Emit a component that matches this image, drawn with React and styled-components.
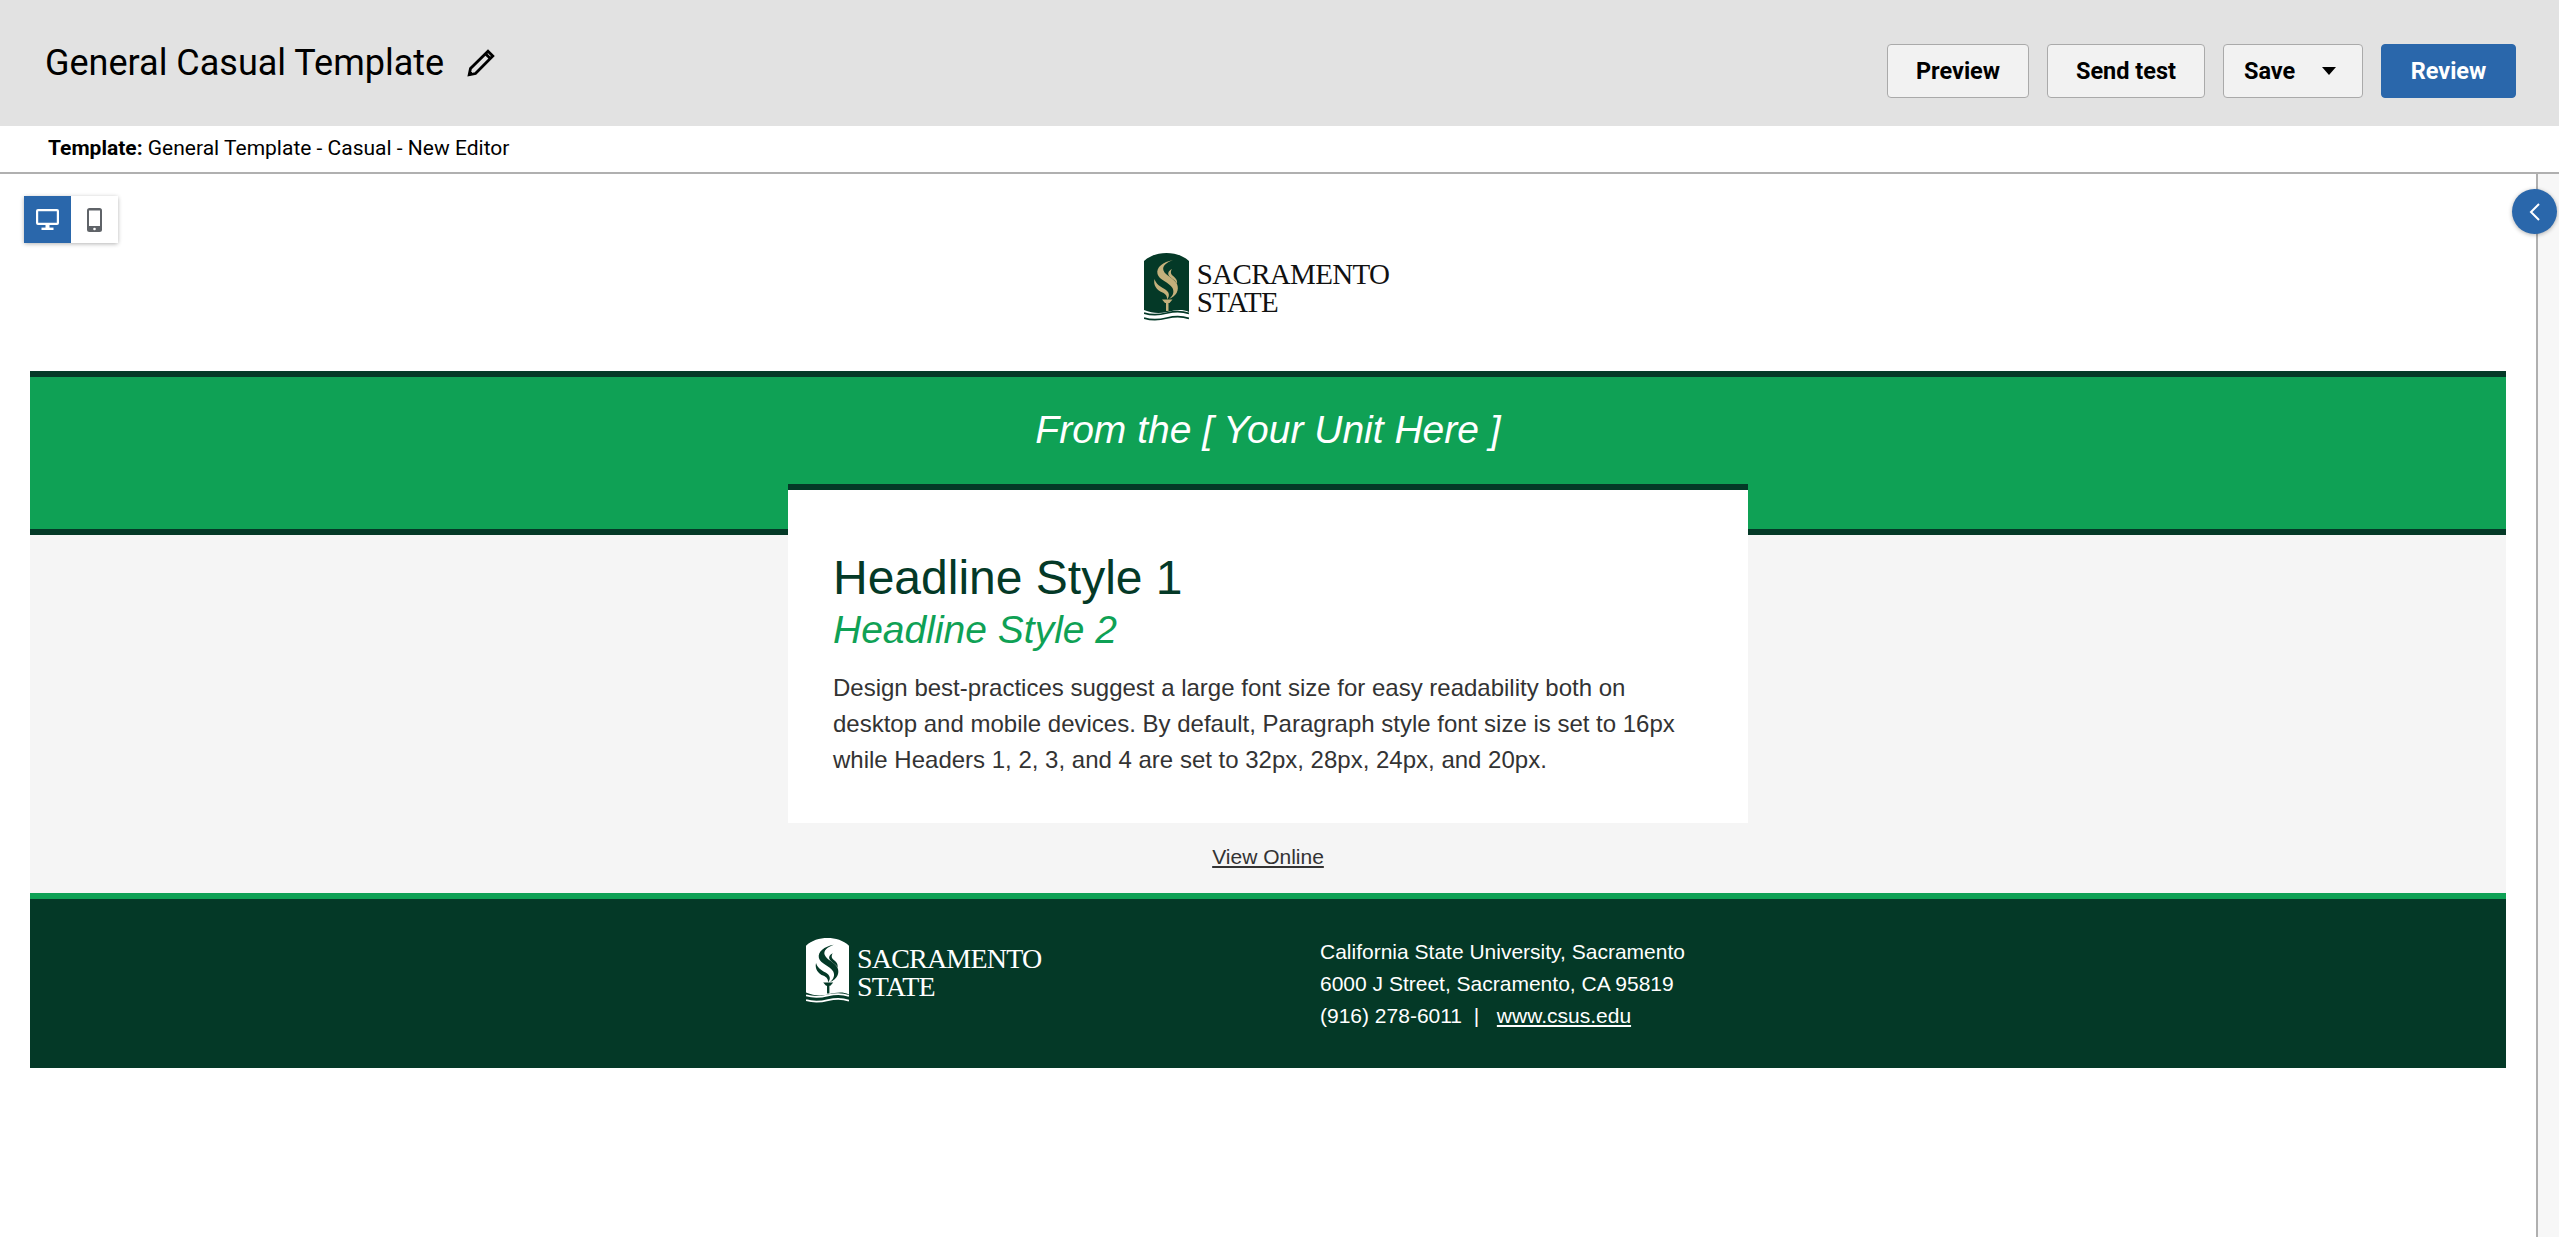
import React from "react";
import styled, { createGlobalStyle } from "styled-components";

const sacGreen = "#043927";
const brightGreen = "#0fa155";
const blue = "#2a67ab";

function Emblem({ shield, flame, wave, width, height }) {
  return (
    <svg width={width} height={height} viewBox="0 0 45 70" style={{ flexShrink: 0 }}>
      <path
        d="M0 8C6 2.5 14 0 22.5 0S39 2.5 45 8V59C38 56 32 57 23 59S8 60 0 57Z"
        fill={shield}
      />
      <path
        d="M29 7C19 9 12 14 13.5 21C15 27 25 29 28.5 35C30.5 39 29 43 25 46C32.5 43 35.5 37 33 31C30 25 21.5 23 19.5 17.5C18 13 22.5 9.5 29 7Z"
        fill={flame}
      />
      <path
        d="M28 16C24 18 23 21 26 24C29 26.5 32 28 33 31C34 26 30 24 28 22C26.5 20.5 26.5 18 28 16Z"
        fill={flame}
      />
      <path
        d="M10.5 26C9 32 12.5 37 18.5 39.5C21.5 41 23.5 43 23 46.5C26.5 42.5 25 38.5 20.5 36C16 33.5 12 31 10.5 26Z"
        fill={flame}
      />
      <path d="M18 46.5H28.5L25.5 50H24.5V58H22V50H21Z" fill={flame} />
      <path
        d="M0 60C8 62.5 15 62 23 60S38 58 45 60.5"
        fill="none"
        stroke={wave}
        strokeWidth="1.8"
      />
      <path
        d="M0 65C8 67.5 15 67 23 65S38 63 45 65.5"
        fill="none"
        stroke={wave}
        strokeWidth="1.8"
      />
    </svg>
  );
}

function PencilIcon() {
  return (
    <svg width="28" height="28" viewBox="0 0 28 28" fill="none" stroke="#000" strokeWidth="2.8">
      <path d="M21 2.2L25.8 7L8.5 24.5L2.2 25.8L3.5 19.5Z" />
      <path d="M18.5 4.7L23.3 9.5" />
      <path d="M2 26L3 22L6 25Z" fill="#000" strokeWidth="1" />
    </svg>
  );
}

function DesktopIcon() {
  return (
    <svg width="23" height="21" viewBox="0 0 23 21" fill="#fff">
      <path
        d="M2 0H21A2 2 0 0 1 23 2V14A2 2 0 0 1 21 16H2A2 2 0 0 1 0 14V2A2 2 0 0 1 2 0ZM2.2 2.2V13.8H20.8V2.2Z"
        fillRule="evenodd"
      />
      <rect x="9.5" y="16" width="4" height="3" />
      <rect x="5.5" y="18.6" width="12" height="2.4" />
    </svg>
  );
}

function MobileIcon() {
  return (
    <svg width="15" height="24" viewBox="0 0 15 24">
      <rect x="0" y="0" width="15" height="24" rx="2.5" fill="#5f6368" />
      <rect x="2" y="2.5" width="11" height="15.5" fill="#fff" />
      <circle cx="7.5" cy="21" r="1.3" fill="#fff" />
    </svg>
  );
}

function ChevronLeft() {
  return (
    <svg width="12" height="18" viewBox="0 0 12 18" fill="none" stroke="#fff" strokeWidth="2">
      <path d="M10 1L2 9L10 17" />
    </svg>
  );
}

function CaretDown() {
  return (
    <svg width="14" height="8" viewBox="0 0 14 8" fill="#000">
      <path d="M0 0H14L7 8Z" />
    </svg>
  );
}

export default function App() {
  return (
    <Page>
      <GlobalStyle />
      <TopBar>
        <TitleGroup>
          <Title>General Casual Template</Title>
          <PencilIcon />
        </TitleGroup>
        <Actions>
          <Button $width={142}>Preview</Button>
          <Button $width={158}>Send test</Button>
          <SaveButton>
            Save
            <CaretDown />
          </SaveButton>
          <PrimaryButton>Review</PrimaryButton>
        </Actions>
      </TopBar>
      <TemplateRow>
        <b>Template:</b> General Template - Casual - New Editor
      </TemplateRow>
      <Workspace>
        <Canvas>
          <DeviceToggle>
            <DeviceButton $active>
              <DesktopIcon />
            </DeviceButton>
            <DeviceButton>
              <MobileIcon />
            </DeviceButton>
          </DeviceToggle>
          <Email>
            <LogoRow>
              <Logo>
                <Emblem width={45} height={70} shield={sacGreen} flame="#c4b07b" wave={sacGreen} />
                <LogoText $color="#111" $size={29} $tracking={-0.7}>
                  <span>Sacramento</span>
                  <span>State</span>
                </LogoText>
              </Logo>
            </LogoRow>
            <Hero>From the [ Your Unit Here ]</Hero>
            <Body>
              <Card>
                <Headline1>Headline Style 1</Headline1>
                <Headline2>Headline Style 2</Headline2>
                <Paragraph>
                  Design best-practices suggest a large font size for easy readability both on
                  <br />
                  desktop and mobile devices. By default, Paragraph style font size is set to 16px
                  <br />
                  while Headers 1, 2, 3, and 4 are set to 32px, 28px, 24px, and 20px.
                </Paragraph>
              </Card>
              <ViewOnline href="#">View Online</ViewOnline>
            </Body>
            <Footer>
              <FooterInner>
                <FooterLogo>
                  <Emblem width={43} height={67} shield="#fff" flame={sacGreen} wave="#fff" />
                  <LogoText $color="#fff" $size={28} $tracking={-0.8}>
                    <span>Sacramento</span>
                    <span>State</span>
                  </LogoText>
                </FooterLogo>
                <Address>
                  California State University, Sacramento
                  <br />
                  6000 J Street, Sacramento, CA 95819
                  <br />
                  (916) 278-6011 &nbsp;|&nbsp; <a href="#">www.csus.edu</a>
                </Address>
              </FooterInner>
            </Footer>
          </Email>
        </Canvas>
        <SidePanel>
          <CollapseButton>
            <ChevronLeft />
          </CollapseButton>
        </SidePanel>
      </Workspace>
    </Page>
  );
}

const GlobalStyle = createGlobalStyle`
  html, body {
    margin: 0;
    height: 100%;
    overflow: hidden;
    background: #fff;
  }
  #root {
    height: 100%;
  }
`;

const Page = styled.div`
  height: 100%;
  display: flex;
  flex-direction: column;
  font-family: Roboto, "Liberation Sans", sans-serif;
`;

const TopBar = styled.header`
  height: 126px;
  flex-shrink: 0;
  background: #e2e2e2;
  display: flex;
  align-items: flex-start;
  justify-content: space-between;
  padding: 44px 43px 0 45px;
  box-sizing: border-box;
`;

const TitleGroup = styled.div`
  display: flex;
  align-items: center;
  gap: 23px;
  margin-top: 2px;
  height: 33px;
`;

const Title = styled.h1`
  margin: 0;
  font-size: 36px;
  font-weight: 400;
  color: #000;
`;

const Actions = styled.div`
  display: flex;
  gap: 18px;
`;

const Button = styled.button`
  width: ${(p) => p.$width}px;
  height: 54px;
  box-sizing: border-box;
  background: #f2f2f2;
  border: 1px solid #aaa;
  border-radius: 4px;
  font-family: inherit;
  font-size: 23.5px;
  font-weight: 700;
  color: #000;
  padding: 0;
`;

const SaveButton = styled(Button)`
  width: 140px;
  display: flex;
  align-items: center;
  justify-content: space-between;
  padding: 0 26px 0 20px;
`;

const PrimaryButton = styled(Button)`
  width: 135px;
  background: ${blue};
  border-color: ${blue};
  color: #fff;
`;

const TemplateRow = styled.div`
  height: 48px;
  flex-shrink: 0;
  box-sizing: border-box;
  border-bottom: 2px solid #b0b0b0;
  padding: 10px 48px 0;
  font-size: 21px;
  color: #000;
`;

const Workspace = styled.main`
  flex: 1;
  display: flex;
  position: relative;
  min-height: 0;
`;

const Canvas = styled.div`
  flex: 1;
  position: relative;
  padding: 0 30px;
`;

const DeviceToggle = styled.div`
  position: absolute;
  left: 24px;
  top: 22px;
  display: flex;
  background: #fff;
  border-radius: 2px;
  box-shadow: 0 1px 4px rgba(0, 0, 0, 0.3);
`;

const DeviceButton = styled.div`
  width: 47px;
  height: 47px;
  display: flex;
  align-items: center;
  justify-content: center;
  background: ${(p) => (p.$active ? blue : "#fff")};
`;

const SidePanel = styled.aside`
  width: 23px;
  flex-shrink: 0;
  box-sizing: border-box;
  border-left: 2px solid #b0b0b0;
  background: #f7f7f7;
`;

const CollapseButton = styled.div`
  position: absolute;
  right: 2px;
  top: 15px;
  width: 45px;
  height: 45px;
  border-radius: 50%;
  background: ${blue};
  box-shadow: 0 1px 4px rgba(0, 0, 0, 0.3);
  display: flex;
  align-items: center;
  justify-content: center;
`;

const Email = styled.div`
  font-family: "Liberation Sans", Arial, sans-serif;
`;

const LogoRow = styled.div`
  display: flex;
  justify-content: center;
  padding: 79px 0 48px;
  margin-left: -3px;
`;

const Logo = styled.div`
  display: flex;
  align-items: flex-start;
  gap: 8px;
`;

const FooterLogo = styled(Logo)`
  margin-top: 2px;
`;

const LogoText = styled.div`
  display: flex;
  flex-direction: column;
  padding-top: 7px;
  font-family: "Liberation Serif", serif;
  font-size: ${(p) => p.$size}px;
  letter-spacing: ${(p) => p.$tracking}px;
  line-height: 28px;
  text-transform: uppercase;
  color: ${(p) => p.$color};
`;

const Hero = styled.div`
  height: 164px;
  box-sizing: border-box;
  background: ${brightGreen};
  border-top: 6px solid ${sacGreen};
  border-bottom: 6px solid ${sacGreen};
  padding-top: 30px;
  text-align: center;
  font-size: 39px;
  font-style: italic;
  line-height: 46px;
  color: #fff;
`;

const Body = styled.div`
  background: #f5f5f5;
  display: flex;
  flex-direction: column;
  align-items: center;
  height: 358px;
`;

const Card = styled.div`
  width: 960px;
  margin-top: -51px;
  height: 339px;
  box-sizing: border-box;
  background: #fff;
  border-top: 6px solid ${sacGreen};
  padding: 60px 45px 0;
  flex-shrink: 0;
`;

const Headline1 = styled.h2`
  margin: 0;
  font-size: 48px;
  font-weight: 400;
  line-height: 55px;
  color: ${sacGreen};
`;

const Headline2 = styled.h3`
  margin: 0;
  font-size: 39px;
  font-weight: 400;
  font-style: italic;
  line-height: 50px;
  color: ${brightGreen};
`;

const Paragraph = styled.p`
  margin: 15px 0 0;
  font-size: 24px;
  line-height: 36px;
  color: #333;
`;

const ViewOnline = styled.a`
  margin-top: 22px;
  font-size: 21px;
  color: #333;
  text-decoration: underline;
`;

const Footer = styled.div`
  height: 175px;
  box-sizing: border-box;
  background: ${sacGreen};
  border-top: 6px solid ${brightGreen};
  display: flex;
  justify-content: center;
`;

const FooterInner = styled.div`
  width: 960px;
  display: grid;
  grid-template-columns: 514px auto;
  align-items: start;
  padding: 37px 18px 0;
  box-sizing: border-box;
`;

const Address = styled.div`
  font-size: 21px;
  line-height: 32px;
  color: #fff;

  a {
    color: #fff;
    margin-left: 6px;
  }
`;
